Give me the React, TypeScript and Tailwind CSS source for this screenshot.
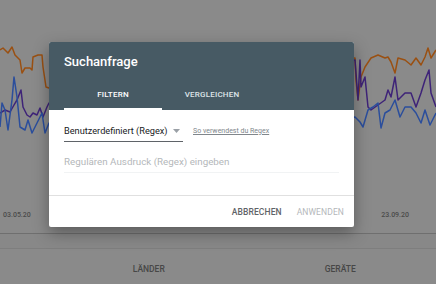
const orange = "0,50 3,48 8,53 12,47 15,55 20,60 22,73 25,68 30,68 32,70 33,57 38,55 42,55 43,67 46,87 49,88 355,58 356,80 358,100 361,77 365,67 371,58 378,55 385,58 388,57 391,62 395,73 398,58 405,60 411,65 416,58 421,65 425,57 428,48 431,58 436,50";
const purple = "0,113 5,110 10,112 14,105 17,100 21,90 23,107 27,115 30,117 33,113 37,115 40,108 43,117 47,107 49,103 355,60 358,100 360,60 361,87 365,77 368,107 371,110 378,105 385,100 388,90 391,97 395,77 398,100 405,93 411,93 416,107 421,93 425,80 429,70 431,93 436,107";
const blue = "0,127 2,103 5,110 8,130 12,100 14,77 17,97 20,127 25,130 28,120 32,133 37,123 42,113 45,133 49,123 355,117 360,122 363,127 368,110 373,107 378,103 381,128 385,113 390,110 395,100 400,117 405,107 411,107 416,113 421,123 425,110 430,125 436,113";

function Dialog() {
  return (
    <div className="absolute left-[49px] top-[42px] w-[305px] overflow-hidden rounded-[2px] bg-white shadow-[0_6px_16px_rgba(0,0,0,0.35)]">
      <div className="bg-[#475a64] pl-[15px]">
        <div className="h-[38px] pt-[11px] text-[13px] font-medium leading-[18px] text-white">
          Suchanfrage
        </div>
        <div className="flex h-[30px]">
          <div className="flex w-[98px] flex-col">
            <div className="flex flex-1 items-center justify-center pt-[2px] text-[8px] font-medium tracking-[0.2px] text-white">
              FILTERN
            </div>
            <div className="h-[2px] bg-white" />
          </div>
          <div className="flex w-[100px] items-center justify-center pb-[1px] text-[8px] font-medium tracking-[0.2px] text-[#dfe5e8]">
            VERGLEICHEN
          </div>
        </div>
      </div>
      <div className="h-[85px] px-[15px] pt-[13px]">
        <div className="flex items-center">
          <div className="flex h-[19px] w-[119px] shrink-0 items-center whitespace-nowrap border-b border-[#5f6368] pb-[3px]">
            <span className="text-[9.2px] leading-[14px] text-[#202124]">Benutzerdefiniert (Regex)</span>
            <svg width="7" height="4" viewBox="0 0 7 4" className="ml-[5px] shrink-0">
              <path d="M0 0h7L3.5 4z" fill="#9aa0a6" />
            </svg>
          </div>
          <span className="ml-[10px] whitespace-nowrap pb-[3px] text-[7px] text-[#80868b] underline">
            So verwendest du Regex
          </span>
        </div>
        <div className="mt-[12px] flex h-[19px] w-[275px] items-center border-b border-[#f1f3f4] pb-[2px] text-[9.8px] text-[#b4b7ba]">
          Regulären Ausdruck (Regex) eingeben
        </div>
      </div>
      <div className="flex h-[32px] items-center justify-end gap-[15px] border-t border-[#e0e0e0] pr-[10px] pt-[2px] text-[8.5px] tracking-[0.1px]">
        <span className="font-medium text-[#5f6368]">ABBRECHEN</span>
        <span className="text-[#b4b7ba]">ANWENDEN</span>
      </div>
    </div>
  );
}

export default function App() {
  return (
    <div className="relative h-[284px] w-[436px] overflow-hidden bg-[#8a8a8a] font-['Roboto',sans-serif]">
      <div className="h-[233px]">
        <svg width="436" height="200" className="block" fill="none" strokeWidth="1.5" strokeLinejoin="round">
          <polyline points={orange} stroke="#9a5012" />
          <polyline points={purple} stroke="#3e2378" />
          <polyline points={blue} stroke="#2b4e9c" />
        </svg>
        <div className="flex justify-between px-[3px] pt-[10px] text-[7px] font-medium text-[#4a4a4a]">
          <span>03.05.20</span>
          <span className="pr-[24px]">23.09.20</span>
        </div>
      </div>
      <div className="h-[15px] border-t border-[#6f6f6f] bg-[#888888]" />
      <div className="flex h-[36px] border-t border-[#7e7e7e] pl-[53px] text-[8.5px] font-medium text-[#474747]">
        <div className="flex w-[196px] items-center justify-center pt-[6px]">LÄNDER</div>
        <div className="flex w-[196px] items-center justify-center pt-[6px]">GERÄTE</div>
      </div>
      <Dialog />
    </div>
  );
}
